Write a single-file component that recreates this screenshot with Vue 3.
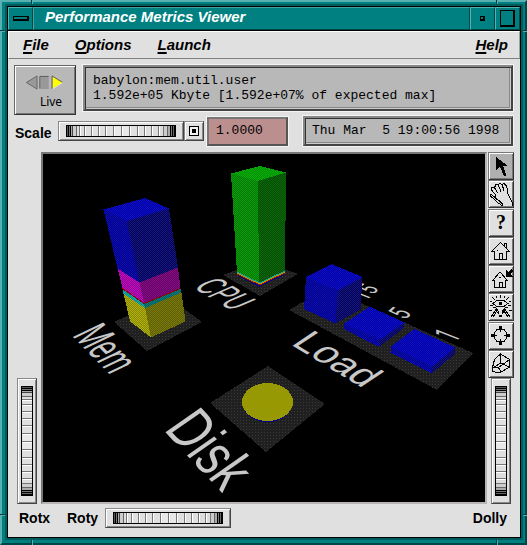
<script setup>
import { ref } from 'vue'

const scale = ref('1.0000')
const menus = ['File', 'Options', 'Launch']

const dithers = [
  { id: 'plate', a: '#202020', b: '#383838', size: 3 },
  { id: 'blueTop', a: '#0000a8', b: '#1010c0', size: 2 },
  { id: 'blueLeft', a: '#000090', b: '#1010a8', size: 2 },
  { id: 'blueRight', a: '#000060', b: '#181874', size: 2 },
  { id: 'magLeft', a: '#980098', b: '#b810b8', size: 2 },
  { id: 'magRight', a: '#680068', b: '#801080', size: 2 },
  { id: 'cyanLeft', a: '#009090', b: '#10a8a8', size: 2 },
  { id: 'cyanRight', a: '#006060', b: '#107878', size: 2 },
  { id: 'yelLeft', a: '#888800', b: '#b0b010', size: 2 },
  { id: 'yelRight', a: '#606000', b: '#787810', size: 2 },
  { id: 'greenTop', a: '#009400', b: '#10a810', size: 2 },
  { id: 'greenLeft', a: '#007c00', b: '#109810', size: 2 },
  { id: 'greenRight', a: '#005000', b: '#106410', size: 2 },
  { id: 'disk', a: '#989800', b: '#989818', size: 3 }
]

const backFaces = [
  { p: '114,322 168,297 202,322 147,351', f: 'plate' },
  { p: '223,275 260,261 298,274 260,296', f: 'plate' },
  { p: '289,310 327,288 473,353 437,390', f: 'plate' },
  { p: '210,403 268,366 325,404 266,452', f: 'plate' }
]

const faces = [
  // memory stack
  { p: '103.5,209.5 145,198 169,208.5 126.5,221', f: 'blueTop' },
  { p: '103.5,209.5 126.5,221 139.5,282.5 117.5,268.5', f: 'blueLeft' },
  { p: '169,208.5 126.5,221 139.5,282.5 178,267.5', f: 'blueRight' },
  { p: '117.5,268.5 139.5,282.5 144,303 122.5,288', f: 'magLeft' },
  { p: '178,267.5 139.5,282.5 144,303 180.5,288', f: 'magRight' },
  { p: '122.5,289 144,304 145,308 123.5,293.5', f: 'cyanLeft' },
  { p: '180.5,289 144,304 145,308 181.5,292.5', f: 'cyanRight' },
  { p: '123.5,293.5 145,308 151,337.5 130,321.5', f: 'yelLeft' },
  { p: '181.5,292.5 145,308 151,337.5 185.5,321.5', f: 'yelRight' },
  // processor column
  { p: '231,173.5 259.5,166 286,172.5 257.5,181', f: 'greenTop' },
  { p: '231,173.5 257.5,181 259.5,284 237,272.5', f: 'greenLeft' },
  { p: '286,172.5 257.5,181 259.5,284 285,271.5', f: 'greenRight' },
  // load averages
  { p: '306,277 331.5,264 362.5,277 338,290.5', f: 'blueTop' },
  { p: '306,277 338,290.5 335.5,323.5 304,309', f: 'blueLeft' },
  { p: '362.5,277 338,290.5 335.5,323.5 360.5,309.5', f: 'blueRight' },
  { p: '344,323.5 369.5,306.5 404.5,322.5 380.5,339.5', f: 'blueTop' },
  { p: '344,323.5 380.5,339.5 378.5,347 344,329', f: 'blueLeft' },
  { p: '404.5,322.5 380.5,339.5 378.5,347 403.5,328.5', f: 'blueRight' },
  { p: '391,346.5 414.5,329 455.5,347.5 432.5,366.5', f: 'blueTop' },
  { p: '391,346.5 432.5,366.5 431.5,373.5 390.5,352.5', f: 'blueLeft' },
  { p: '455.5,347.5 432.5,366.5 431.5,373.5 454.5,354.5', f: 'blueRight' }
]

// floor-plane projection of each caption
const captions = [
  { t: 'Mem', m: 'matrix(1.76 1.79 -4.4 2.1 71.4 335.4)' },
  { t: 'CPU', m: 'matrix(1.9 1.13 -3.63 1.57 192.3 287.3)' },
  { t: 'Load', m: 'matrix(3.28 2 -3.23 2.15 290 344)' },
  { t: 'Disk', m: 'matrix(3.05 3.28 -5.15 3.6 163 429.5)' }
]
const ticks = [
  { t: '15', m: 'matrix(1.2 -1.07 2.3 0.9 366 301)' },
  { t: '5', m: 'matrix(1.3 -1.17 2.6 1.04 405 320)' },
  { t: '1', m: 'matrix(1.2 -1.1 3.2 1.28 455 342.5)' }
]

const tools = [
  { name: 'Pick', solid: 'M8 5V18L12 15L16 24H18V22L15 14H20Z' },
  {
    name: 'View',
    line: 'M3 14.5L6 16.5L8 18.5L12 21.5L15 24.5M3 14.5L2.5 16L6 19L10 23L15 26M8 18.5L7 14L4 10.5L3.5 8L5 7L7 8.5L9.5 13M6.5 8L7.5 5L9.5 4.5L11 7L13 11.5M10 5L12 3.5L14 4.5L16 10.5M14 4.5L16 3.5L18 5.5L19.5 9.5V13L22 18L24 22L24.5 26'
  },
  { name: 'Help', glyph: '?' },
  {
    name: 'Home',
    line: 'M4 14L12.5 5.5L21 14H18.5V22.5H6.5V14ZM16.5 9V6.5H18.5V11M11.5 22V16.5H14.5V22M9 13H10'
  },
  {
    name: 'Set home',
    line: 'M5 15L12 7L19 15H17.5V22.5H6.5V15ZM11.5 22V17.5H14.5V22M10.5 12.5H12.5',
    solid: 'M18 12V5L20 7L23 4L25 6L22 9L25 12Z'
  },
  {
    name: 'View all',
    line: 'M5 10.5L9 7.5H16L20 10.5L16 13.5H9ZM12.5 2V5M8 3L9 5M17 3L16 5M4 4L7 7M21 4L18 7M2 8L4 9M23 8L21 9M2 13L5 12M23 13L20 12M5 15L8 14M20 15L17 14M9 15L3 24M10 16L5 24M16 15L22 24M15 16L20 24M1 18L4 17M24 18L21 17',
    solid: 'M11 9H14V12H11ZM11 17L8 20H10V21H11ZM14 17L17 20H15V21H14ZM11 22H14V24H11Z'
  },
  {
    name: 'Seek',
    line: 'M12.5 6.5L16 7.5L18 10L19 13.5L18 17L16 19.5L12.5 20.5L9 19.5L7 17L6 13.5L7 10L9 7.5ZM12.5 4V10M12.5 17V23M3 13.5H9M16 13.5H22',
    solid: 'M11 4H14V8H11ZM11 19H14V23H11ZM3 12H7V15H3ZM18 12H22V15H18Z'
  },
  {
    name: 'Perspective',
    line: 'M4.5 17.5L6.5 9.5L12.5 4V13L5 18M12.5 4L21.5 9.5V17L12.5 13M21.5 17L13 22L10.5 17.5H5L4.5 21L8 22.5H13M10.5 17.5L21.5 9.5'
  }
]
</script>

<template>
  <div class="frame">
    <div class="rim">
      <header class="title">
        <button class="deco" aria-label="Window menu"><span class="dash"></span></button>
        <h1>Performance Metrics Viewer</h1>
        <button class="deco" aria-label="Minimize"><span class="dot"></span></button>
        <button class="deco" aria-label="Maximize"><span class="square"></span></button>
      </header>

      <nav class="menu">
        <button v-for="m in menus" :key="m"><u>{{ m[0] }}</u>{{ m.slice(1) }}</button>
        <button class="help"><u>H</u>elp</button>
      </nav>

      <main>
        <div class="status">
          <button class="live">
            <svg width="42" height="16" viewBox="0 0 42 16" aria-hidden="true">
              <path d="M12.5 1V15L1 8Z" fill="#999" />
              <path d="M12.5 1V15L1 8Z" fill="none" stroke="#666" />
              <path d="M16 2H25V15H16Z" fill="#999" />
              <path d="M15.5 14.5V1.5H25" fill="none" stroke="#555" />
              <path d="M29 1V15L40 8Z" fill="#ff0" />
              <path d="M28.5 15V1L40 8" fill="none" stroke="#555" />
              <path d="M40 8L29 15" stroke="#ddd" />
            </svg>
            <span>Live</span>
          </button>
          <output class="well info"><span>babylon:mem.util.user</span><span>1.592e+05 Kbyte [1.592e+07% of expected max]</span></output>
        </div>

        <div class="controls">
          <label for="scale">Scale</label>
          <div class="wheel"><input id="scale" type="range" /></div>
          <button class="reset" aria-label="Reset scale"><span></span></button>
          <input v-model="scale" class="value" type="text" aria-label="Scale value" />
          <output class="well date">Thu Mar&nbsp; 5 19:00:56 1998</output>
        </div>

        <div class="viewer">
          <div class="side">
            <div class="wheel tall"><input id="rotx" type="range" /></div>
          </div>
          <div class="scene">
            <svg viewBox="43 154 442 348" role="img" aria-label="Performance scene">
              <defs>
                <pattern v-for="d in dithers" :id="d.id" :key="d.id" :width="d.size" :height="d.size" patternUnits="userSpaceOnUse">
                  <rect :width="d.size" :height="d.size" :fill="d.a" />
                  <rect width="1" height="1" :fill="d.b" />
                  <rect v-if="d.size === 2" x="1" y="1" width="1" height="1" :fill="d.b" />
                </pattern>
              </defs>
              <g shape-rendering="crispEdges">
                <polygon v-for="f in backFaces" :key="f.p" :points="f.p" :fill="`url(#${f.f})`" />
              </g>
              <g class="ticks">
                <text v-for="c in ticks" :key="c.t" :transform="c.m">{{ c.t }}</text>
              </g>
              <g shape-rendering="crispEdges">
                <polygon v-for="f in faces" :key="f.p" :points="f.p" :fill="`url(#${f.f})`" />
                <g fill="none">
                  <path d="M122.5 288.5L144 303.5L180.5 288.5" stroke="#900000" />
                  <path d="M237 272L259.5 283L285 271" stroke="#10a0a0" />
                  <path d="M237 273L259.5 284L285 272" stroke="#b0a000" />
                  <path d="M237 274L259.5 285L285 273" stroke="#a01000" />
                  <path d="M238 275.5L259.5 286L284 274.5" stroke="#000090" />
                </g>
                <ellipse cx="267.5" cy="403" rx="25" ry="19" fill="#000090" />
                <ellipse cx="267.5" cy="402" rx="25.5" ry="19" fill="url(#disk)" />
              </g>
              <g>
                <text v-for="c in captions" :key="c.t" :transform="c.m">{{ c.t }}</text>
              </g>
            </svg>
          </div>
          <div class="tools">
            <button v-for="(t, i) in tools" :key="t.name" :class="{ on: i === 0 }" :aria-label="t.name">
              <svg width="26" height="28" viewBox="0 0 26 28" shape-rendering="crispEdges">
                <path v-if="t.line" :d="t.line" fill="none" stroke="#000" />
                <path v-if="t.solid" :d="t.solid" />
                <text v-if="t.glyph" class="glyph" x="13" y="20" text-anchor="middle">{{ t.glyph }}</text>
              </svg>
            </button>
            <div class="wheel tall"><input id="dolly" type="range" /></div>
          </div>
        </div>

        <div class="foot">
          <label for="rotx">Rotx</label>
          <label for="roty">Roty</label>
          <div class="wheel"><input id="roty" type="range" /></div>
          <label class="end" for="dolly">Dolly</label>
        </div>
      </main>
    </div>
  </div>
</template>

<style>
body {
  background: #008080;
}
</style>

<style scoped>
* {
  box-sizing: border-box;
}
.frame {
  position: relative;
  display: flex;
  min-height: 100vh;
  padding: 4px 4px 5px 5px;
  background: #008080;
  border: 2px solid;
  border-color: #58b0b0 #004848 #004848 #58b0b0;
  font: bold 14px 'Liberation Sans', sans-serif;
  color: #000;
}
/* resize-corner notches */
.frame::before,
.frame::after {
  content: '';
  position: absolute;
  border: solid #003c3c;
}
.frame::before {
  inset: -2px 28px -2px 29px;
  border-width: 0 1px;
  box-shadow: 1px 0 #58b0b0, inset 1px 0 #58b0b0;
}
.frame::after {
  inset: 28px -2px 28px -2px;
  border-width: 1px 0;
  box-shadow: 0 1px #58b0b0, inset 0 1px #58b0b0;
}
.rim {
  position: relative;
  z-index: 1;
  flex: 1;
  min-width: 0;
  display: flex;
  flex-direction: column;
  border: 1px solid #000;
  outline: 2px solid #005c5c;
  background: #e0e0e0;
}
button {
  margin: 0;
  padding: 0;
  border: 0;
  font: inherit;
  color: inherit;
}
.title {
  display: flex;
  height: 24px;
  background: #008080;
  border-bottom: 1px solid #000;
  color: #fff;
}
.title h1 {
  flex: 1;
  margin: 0;
  padding-left: 11px;
  font: italic bold 15px/18px 'Liberation Sans', sans-serif;
  border: 1px solid;
  border-color: #48a0a0 #004848 #004848 #48a0a0;
}
.deco {
  display: flex;
  align-items: center;
  justify-content: center;
  width: 25px;
  background: #008080;
  border: 1px solid;
  border-color: #58b0b0 #004848 #004848 #58b0b0;
}
.dash {
  width: 16px;
  height: 5px;
  border: 1px solid #000;
  border-width: 1px 2px 2px 1px;
}
.dot {
  width: 5px;
  height: 5px;
  border: 1px solid #000;
  border-width: 1px 2px 2px 1px;
}
.square {
  width: 15px;
  height: 17px;
  border: 1px solid #000;
  border-width: 1px 2px 2px 1px;
}
.menu {
  display: flex;
  gap: 26px;
  height: 28px;
  padding: 0 11px 0 14px;
  border: 1px solid;
  border-color: #fff #a0a0a0 #808080 #fff;
  font: italic bold 15px/26px 'Liberation Sans', sans-serif;
}
.menu button {
  background: none;
}
.menu u {
  text-underline-offset: 2px;
  text-decoration-thickness: 2px;
}
.help {
  margin-left: auto;
}
main {
  flex: 1;
  display: flex;
  flex-direction: column;
  padding: 6px 6px 7px 6px;
}
.status {
  display: flex;
  align-items: flex-start;
  gap: 7px;
  padding-right: 1px;
}
.live {
  display: flex;
  flex-direction: column;
  align-items: center;
  width: 62px;
  height: 50px;
  padding: 9px 0 0 0;
  background: #b8b8b8;
  border: 1px solid;
  border-color: #666 #333 #333 #666;
  box-shadow: inset 1px 1px #fff, inset -1px -1px #777;
}
.live span {
  padding-left: 12px;
  font: 12px/24px 'Noto Sans', sans-serif;
}
.well {
  background: #b8b8b8;
  border: 2px solid;
  border-color: #888 #444 #444 #888;
  outline: 1px solid #f4f4f4;
  box-shadow: inset 1px 1px #333, inset -1px -1px #ccc, inset -2px -2px #888;
  font: 13px/15px 'Liberation Mono', monospace;
  white-space: pre;
}
.info {
  display: flex;
  flex-direction: column;
  flex: 1;
  height: 46px;
  padding: 6px 8px;
  overflow: hidden;
}
.controls {
  display: flex;
  align-items: center;
  height: 32px;
  padding-right: 1px;
}
.controls label {
  width: 44px;
  padding: 4px 0 0 1px;
}
.wheel {
  display: flex;
  flex: none;
  width: 126px;
  height: 20px;
  padding: 3px 7px;
  background: #e0e0e0;
  border: 1px solid;
  border-color: #888 #444 #444 #888;
  box-shadow: inset 1px 1px #fff, inset -1px -1px #888;
  --dir: 90deg;
}
.wheel input {
  appearance: none;
  width: 110px;
  height: 12px;
  margin: 0;
  border-radius: 0;
  border: solid #000;
  border-width: 1px 0;
  background: linear-gradient(
    var(--dir),
    #000 1px, #555 1px 2px, #000 2px 3px, #777 3px 4px, #000 4px 5px, #aaa 5px 6px, #444 6px 7px,
    #ccc 7px 10px, #666 10px 11px, #ddd 11px 13px, #777 13px 14px, #fff 14px 15px,
    #ddd 15px 18px, #777 18px 19px, #fff 19px 20px,
    #e0e0e0 20px 25px, #777 25px 26px, #fff 26px 27px,
    #e0e0e0 27px 32px, #777 32px 33px, #fff 33px 34px,
    #e0e0e0 34px 39px, #777 39px 40px, #fff 40px 41px,
    #e0e0e0 41px 47px, #777 47px 48px, #fff 48px 49px,
    #e8e8e8 49px 55px, #777 55px 56px, #fff 56px 57px,
    #e8e8e8 57px 63px, #777 63px 64px, #fff 64px 65px,
    #e0e0e0 65px 71px, #777 71px 72px, #fff 72px 73px,
    #e0e0e0 73px 78px, #777 78px 79px, #fff 79px 80px,
    #e0e0e0 80px 85px, #777 85px 86px, #fff 86px 87px,
    #ddd 87px 92px, #777 92px 93px, #fff 93px 94px,
    #ddd 94px 97px, #777 97px 98px, #ccc 98px 101px, #666 101px 102px,
    #aaa 102px 104px, #000 104px 105px, #777 105px 106px, #000 106px 107px, #666 107px 108px, #000 108px 110px
  );
}
.wheel.tall {
  width: 20px;
  height: 126px;
  padding: 7px 3px;
  --dir: 180deg;
}
.wheel.tall input {
  writing-mode: vertical-lr;
  width: 12px;
  height: 110px;
  border-width: 0 1px;
}
.wheel input::-webkit-slider-thumb {
  appearance: none;
  width: 8px;
  height: 8px;
  background: transparent;
}
.reset {
  display: flex;
  align-items: center;
  justify-content: center;
  width: 20px;
  height: 20px;
  background: #e0e0e0;
  border: 1px solid;
  border-color: #888 #444 #444 #888;
  box-shadow: inset 1px 1px #fff, inset -1px -1px #888;
}
.reset span {
  width: 10px;
  height: 10px;
  background: #000;
  border: 1px solid #000;
  box-shadow: inset 0 0 0 2px #f0f0f0;
}
.value {
  width: 81px;
  height: 29px;
  margin: 0 15px 0 3px;
  padding: 0 7px 2px;
  background: #bc8f8f;
  border: 2px solid;
  border-color: #777 #555 #555 #777;
  outline: 1px solid #f4f4f4;
  border-radius: 0;
  font: 13px/15px 'Liberation Mono', monospace;
  color: #000;
}
.date {
  flex: 1;
  height: 30px;
  padding: 5px 7px;
  overflow: hidden;
}
.viewer {
  display: flex;
  margin-top: 5px;
}
.side {
  display: flex;
  align-items: flex-end;
  width: 27px;
  padding-left: 3px;
}
.scene {
  flex: 1;
  min-width: 0;
  background: #000;
  border: 2px solid;
  border-color: #777 #b8b4b4 #b8b4b4 #777;
}
.scene svg {
  display: block;
  width: 100%;
  height: auto;
}
.scene text {
  font: 10px 'Liberation Sans', sans-serif;
  fill: #c8c8c8;
}
.scene .ticks text {
  font-family: Roboto, sans-serif;
}
.tools {
  display: flex;
  flex-direction: column;
  align-items: center;
  justify-content: space-between;
  width: 26px;
  margin-left: 1px;
}
.tools button {
  width: 26px;
  height: 28px;
  background: #e0e0e0;
  box-shadow: inset 1px 1px #777, inset -1px -1px #333, inset 2px 2px #fff, inset -2px -2px #777;
}
.tools .on {
  background: #b0b0b0;
}
.tools svg {
  display: block;
}
.tools .glyph {
  font: bold 20px 'Liberation Serif', serif;
}
.foot {
  display: flex;
  align-items: center;
  padding: 4px 4px 0 5px;
}
.foot label {
  width: 48px;
}
.foot label + label {
  width: 38px;
}
.foot .end {
  width: auto;
  margin: 0 3px 0 auto;
}
</style>
